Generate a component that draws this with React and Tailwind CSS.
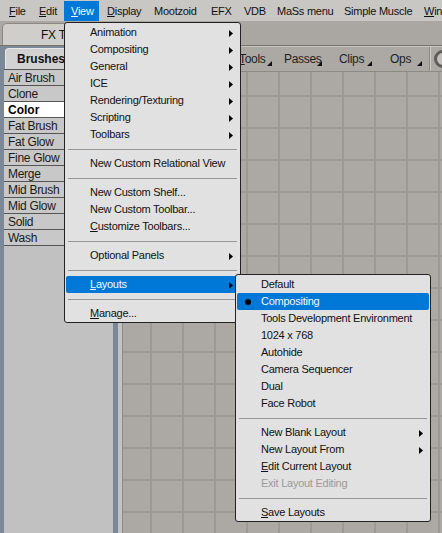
import React from "react";

const Arrow = ({ className = "" }) => (
  <svg width="4" height="7" viewBox="0 0 4 7" className={className}>
    <polygon points="0,0 4,3.5 0,7" fill="#000" />
  </svg>
);

const Corner = ({ className = "" }) => (
  <svg width="5" height="5" viewBox="0 0 5 5" className={className}>
    <polygon points="5,0 5,5 0,5" fill="#111" />
  </svg>
);

function Item({ children, arrow, highlight, disabled, bullet }) {
  return (
    <div
      className={
        highlight
          ? "relative h-[17px] flex items-center pl-[24px] rounded-[2px] bg-[#0078d7] text-[#f4f8fc]"
          : disabled
          ? "relative h-[17px] flex items-center pl-[24px] text-[#9a9a9a]"
          : "relative h-[17px] flex items-center pl-[24px] text-[#111]"
      }
    >
      {bullet && (
        <span className="absolute left-[8px] top-[6px] w-[6px] h-[6px] rounded-full bg-black" />
      )}
      <span>{children}</span>
      {arrow && <Arrow className="absolute right-[6px] top-[6px]" />}
    </div>
  );
}

const Sep = () => (
  <div className="h-[12px] flex items-center px-[2px]">
    <div className="h-px w-full bg-[#979797]" />
  </div>
);

const brushes = [
  "Air Brush",
  "Clone",
  "Color",
  "Fat Brush",
  "Fat Glow",
  "Fine Glow",
  "Merge",
  "Mid Brush",
  "Mid Glow",
  "Solid",
  "Wash",
];

export default function App() {
  return (
    <div className="relative w-[442px] h-[533px] overflow-hidden bg-[#aaa7a3] text-[11px] tracking-[-0.25px] text-[#111] [font-family:'Liberation_Sans',Arial,sans-serif] flex flex-col">
      {/* Menu bar */}
      <div className="h-[21px] shrink-0 bg-[#c9c7c4] flex items-start pt-[1px] pl-[2px] whitespace-nowrap overflow-hidden">
        <div className="shrink-0 w-[30px] h-[20px] flex items-center pl-[7px]"><span><u>F</u>ile</span></div>
        <div className="shrink-0 w-[32px] h-[20px] flex items-center pl-[7px]"><span><u>E</u>dit</span></div>
        <div className="shrink-0 w-[35px] h-[20px] flex items-center pl-[7px] bg-[#0078d7] text-[#f4f8fc]"><span><u>V</u>iew</span></div>
        <div className="shrink-0 w-[48px] h-[20px] flex items-center pl-[8px]"><span><u>D</u>isplay</span></div>
        <div className="shrink-0 w-[57px] h-[20px] flex items-center pl-[7px]"><span>Mootzoid</span></div>
        <div className="shrink-0 w-[33px] h-[20px] flex items-center pl-[7px]"><span>EFX</span></div>
        <div className="shrink-0 w-[33px] h-[20px] flex items-center pl-[7px]"><span>VDB</span></div>
        <div className="shrink-0 w-[67px] h-[20px] flex items-center pl-[7px]"><span>MaSs menu</span></div>
        <div className="shrink-0 w-[80px] h-[20px] flex items-center pl-[7px]"><span>Simple Muscle</span></div>
        <div className="shrink-0 w-[25px] h-[20px] flex items-center pl-[7px] overflow-hidden"><span><u>W</u>in</span></div>
      </div>

      {/* Tab row */}
      <div className="h-[25px] shrink-0 bg-[#aaa7a3] border-b border-[#77746f] flex items-end pl-[2px]">
        <div className="w-[116px] h-[22px] rounded-tl-[5px] rounded-tr-[2px] bg-[#d0cecb] border-t border-l border-r border-[#8c8985] flex items-center pl-[38px] text-[12px]">
          FX Tree
        </div>
      </div>

      {/* Main area */}
      <div className="flex-1 flex min-h-0">
        {/* Left panel */}
        <div className="w-[113px] shrink-0 bg-[#7b8898] pl-[4px] flex flex-col">
          <div className="h-[23px] shrink-0 flex items-end pl-[1px]">
            <div className="w-[62px] h-[21px] rounded-tl-[4px] bg-[#d2d2d2] border-t border-l border-[#e8e8e8] flex items-center pl-[11px] font-bold text-[12px] tracking-[0px]">
              Brushes
            </div>
          </div>
          <div className="flex-1 bg-[#c1c1c1]">
            <div className="border-b border-[#555]">
              {brushes.map((b) => (
                <div
                  key={b}
                  className={
                    b === "Color"
                      ? "h-[16px] border-t border-[#555] bg-white font-bold text-black flex items-center pl-[4px] text-[12px] tracking-[0px]"
                      : "h-[16px] border-t border-[#555] bg-[#c8c8c8] flex items-center pl-[4px] text-[12px] tracking-[-0.3px] text-[#1a1a1a]"
                  }
                >
                  {b}
                </div>
              ))}
            </div>
          </div>
        </div>
        <div className="w-[5px] shrink-0 bg-[#7b8898]" />
        <div className="w-[4px] shrink-0 bg-[#c3c3c3]" />

        {/* Right area */}
        <div className="flex-1 flex flex-col border-l border-[#8e8b88] min-w-0">
          <div className="h-[26px] shrink-0 bg-[#aca9a5] border-t border-[#c9c6c2] border-b border-b-[#8d8a86] flex items-stretch pl-[116px] whitespace-nowrap text-[12px] tracking-[-0.3px] text-[#1f1f1f] overflow-hidden">
            <div className="shrink-0 relative w-[34px] flex items-center"><span><u>T</u>ools</span><Corner className="absolute right-[1px] top-[14px]" /></div>
            <div className="shrink-0 relative w-[39px] ml-[11px] flex items-center"><span>Passes</span><Corner className="absolute right-[1px] top-[14px]" /></div>
            <div className="shrink-0 relative w-[34px] ml-[16px] flex items-center"><span>Clips</span><Corner className="absolute right-[1px] top-[14px]" /></div>
            <div className="shrink-0 relative w-[33px] ml-[17px] flex items-center"><span>Ops</span><Corner className="absolute right-[1px] top-[14px]" /></div>
            <div className="shrink-0 w-[2px] ml-[6px] bg-[#8a8783] border-r border-[#d0cdc9]" />
            <div className="shrink-0 ml-[3px] flex items-center">
              <div className="w-[18px] h-[18px] rounded-full bg-[#c4c2bf] border-[3px] border-[#5f5d5a]" />
            </div>
          </div>
          <div className="flex-1 bg-[#aca8a4] [background-image:linear-gradient(to_right,#9d9995_2px,transparent_2px),linear-gradient(to_bottom,#9d9995_2px,transparent_2px)] [background-size:32px_32px] [background-position:27px_23px]" />
        </div>
      </div>

      {/* View menu */}
      <div className="absolute left-[64px] top-[22px] w-[177px] bg-[#e1e1e1] border border-[#222] rounded-[3px] px-[1px] pt-[1px] z-10 whitespace-nowrap">
        <Item arrow>Animation</Item>
        <Item arrow>Compositing</Item>
        <Item arrow>General</Item>
        <Item arrow>ICE</Item>
        <Item arrow>Rendering/Texturing</Item>
        <Item arrow>Scripting</Item>
        <Item arrow>Toolbars</Item>
        <Sep />
        <Item>New Custom Relational View</Item>
        <Sep />
        <Item>New Custom Shelf...</Item>
        <Item>New Custom Toolbar...</Item>
        <Item><u>C</u>ustomize Toolbars...</Item>
        <Sep />
        <Item arrow>Optional Panels</Item>
        <Sep />
        <Item arrow highlight><u>L</u>ayouts</Item>
        <Sep />
        <Item><u>M</u>anage...</Item>
      </div>

      {/* Layouts submenu */}
      <div className="absolute left-[235px] top-[274px] w-[196px] bg-[#e1e1e1] border border-[#222] rounded-[3px] p-[1px] pb-0 z-20 whitespace-nowrap">
        <Item>Default</Item>
        <Item highlight bullet>Compositing</Item>
        <Item>Tools Development Environment</Item>
        <Item>1024 x 768</Item>
        <Item>Autohide</Item>
        <Item>Camera Sequencer</Item>
        <Item>Dual</Item>
        <Item>Face Robot</Item>
        <Sep />
        <Item arrow>New Blank Layout</Item>
        <Item arrow>New Layout From</Item>
        <Item><u>E</u>dit Current Layout</Item>
        <Item disabled>Exit Layout Editing</Item>
        <Sep />
        <Item><u>S</u>ave Layouts</Item>
      </div>
    </div>
  );
}
